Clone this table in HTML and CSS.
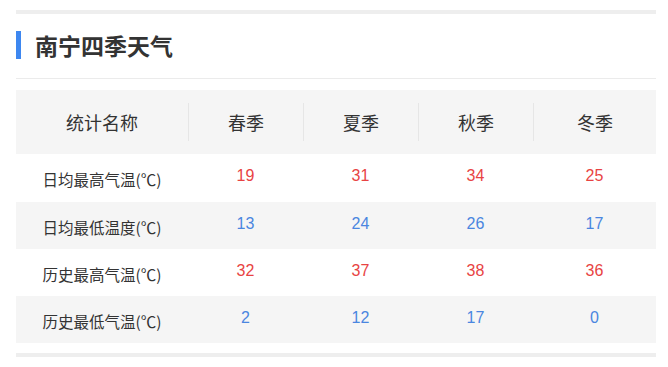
FILE: index.html
```html
<!DOCTYPE html>
<html lang="zh">
<head>
<meta charset="utf-8">
<link rel="stylesheet" href="styles.css">
</head>
<body>
<div class="wrap">
  <div class="bar"></div>
  <div class="heading"><span class="mark"></span><h2>南宁四季天气</h2></div>
  <div class="table">
    <div class="row head">
      <div class="cell">统计名称</div>
      <div class="cell">春季</div>
      <div class="cell">夏季</div>
      <div class="cell">秋季</div>
      <div class="cell">冬季</div>
    </div>
    <div class="row first">
      <div class="cell label">日均最高气温(℃)</div>
      <div class="cell red">19</div><div class="cell red">31</div><div class="cell red">34</div><div class="cell red">25</div>
    </div>
    <div class="row alt">
      <div class="cell label">日均最低温度(℃)</div>
      <div class="cell blue">13</div><div class="cell blue">24</div><div class="cell blue">26</div><div class="cell blue">17</div>
    </div>
    <div class="row">
      <div class="cell label">历史最高气温(℃)</div>
      <div class="cell red">32</div><div class="cell red">37</div><div class="cell red">38</div><div class="cell red">36</div>
    </div>
    <div class="row alt">
      <div class="cell label">历史最低气温(℃)</div>
      <div class="cell blue">2</div><div class="cell blue">12</div><div class="cell blue">17</div><div class="cell blue">0</div>
    </div>
  </div>
  <div class="bar bottom"></div>
</div>
</body>
</html>
```
FILE: styles.css
```css
* { box-sizing: border-box; }
html, body { margin: 0; padding: 0; background: #fff; }
body { font-family: "Noto Sans CJK SC", "Noto Sans", sans-serif; color: #333; }
.wrap { width: 640px; margin-left: 16px; padding-top: 10px; }
.bar { height: 4px; background: #eeeeee; }
.bar.bottom { margin-top: 10px; }
.heading {
  display: flex; align-items: center; gap: 14px;
  height: 65px; padding-top: 8px; padding-bottom: 10px;
  border-bottom: 1px solid #ebebeb;
  margin-bottom: 11px;
}
.mark { width: 5px; height: 28px; background: #3d87f0; }
.heading h2 { margin: 0; font-size: 23px; font-weight: 700; color: #333; line-height: 28px; }
.row { display: grid; grid-template-columns: 172px 115px 115px 115px 1fr; height: 47px; align-items: center; }
.row.first { height: 48px; }
.row.head { height: 64px; background: #f5f5f5; }
.row.alt { background: #f5f5f5; }
.cell { text-align: center; font-size: 15px; line-height: 20px; }
.row.head .cell { font-size: 18px; line-height: 38px; color: #333; }
.row.head .cell + .cell { border-left: 1px solid #e6e6e6; }
.label { color: #333; padding-top: 2px; font-size: 15.5px; }
.red { color: #e84343; margin-top: -4px; }
.blue { color: #4a86e0; margin-top: -4px; }
.red, .blue { font-family: "Liberation Sans", Arial, sans-serif; font-size: 16px; }
```
